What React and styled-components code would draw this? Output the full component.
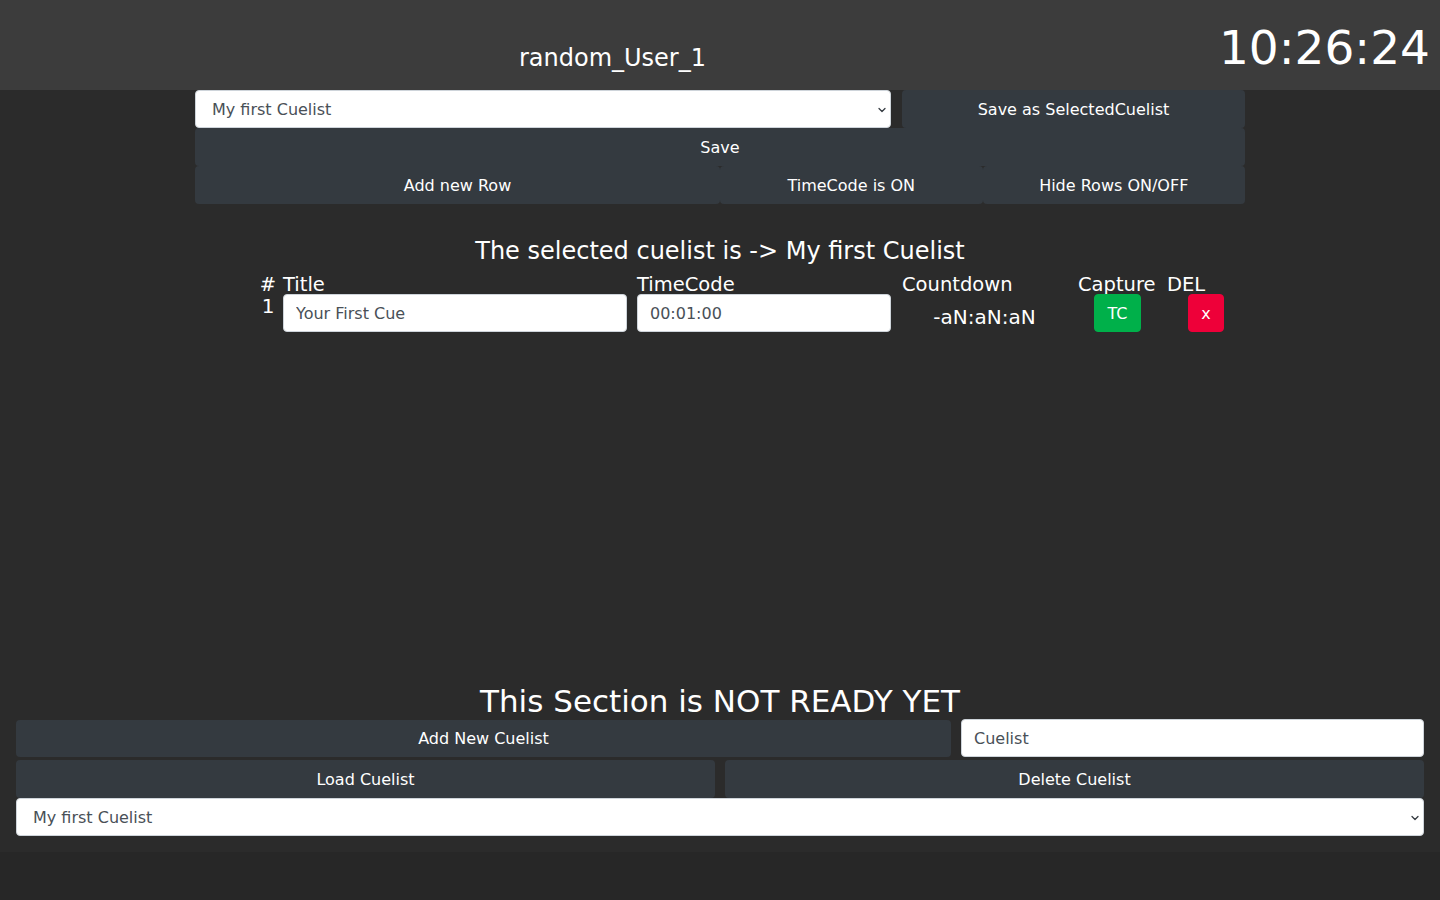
import React from 'react';
import styled, { createGlobalStyle } from 'styled-components';
import { ChevronDown } from 'lucide-react';

const GlobalStyle = createGlobalStyle`
  html, body {
    margin: 0;
    padding: 0;
    background: #272727;
    font-family: "DejaVu Sans", Verdana, sans-serif;
    color: #ffffff;
  }
  * {
    box-sizing: border-box;
  }
`;

const Page = styled.div`
  min-height: 852px;
  display: flex;
  flex-direction: column;
  background: #2b2b2b;
`;

const Header = styled.header`
  height: 90px;
  background: #3c3c3c;
  display: grid;
  grid-template-columns: 1fr auto;
  align-items: start;
  padding: 20px 10px 0 0;
`;

const UserName = styled.div`
  text-align: center;
  font-size: 24px;
  padding: 24px 0 0 6px;
`;

const Clock = styled.div`
  font-size: 47px;
  line-height: normal;
`;

const Main = styled.main`
  flex: 1;
  width: 1050px;
  margin: 0 auto;
`;

const ControlRow = styled.div`
  display: grid;
  grid-template-columns: ${(p) => p.$cols};
  column-gap: ${(p) => p.$colGap || 0}px;
  align-items: end;
  margin-top: ${(p) => p.$gap || 0}px;
`;

const Button = styled.button`
  height: ${(p) => p.$h || 38}px;
  margin-left: ${(p) => p.$ml || 0}px;
  grid-column: ${(p) => p.$span || 'auto'};
  background: #343a40;
  color: #ffffff;
  border: none;
  border-radius: 4px;
  font-family: inherit;
  font-size: 16px;
  padding: 0 12px;
  cursor: pointer;
`;

const SelectWrap = styled.div`
  position: relative;
  width: ${(p) => p.$w || '100%'};
`;

const Select = styled.select`
  appearance: none;
  width: 100%;
  height: 38px;
  background: #ffffff;
  border: 1px solid #ced4da;
  border-radius: 4px;
  padding: 0 28px 0 16px;
  font-family: inherit;
  font-size: 16px;
  color: #495057;
`;

const Chevron = styled(ChevronDown)`
  position: absolute;
  right: 3px;
  top: 14px;
  pointer-events: none;
  color: #343a40;
`;

const TextInput = styled.input`
  width: ${(p) => p.$w || '100%'};
  height: 38px;
  background: #ffffff;
  border: 1px solid #ced4da;
  border-radius: 4px;
  padding: 0 12px;
  font-family: inherit;
  font-size: 16px;
  color: #495057;
`;

const Heading = styled.h3`
  margin: 32px 0 0;
  font-size: 24px;
  line-height: 30px;
  font-weight: normal;
  text-align: center;
`;

const CueTable = styled.div`
  display: grid;
  grid-template-columns: 30px 354px 265px 176px 89px 78px;
  padding-left: 58px;
  margin-top: 9px;
`;

const HeadCell = styled.div`
  font-size: 19.5px;
  line-height: 19px;
  height: 19px;
  text-align: ${(p) => (p.$center ? 'center' : 'left')};
`;

const Cell = styled.div`
  font-size: 20px;
  text-align: ${(p) => (p.$center ? 'center' : 'left')};
  padding-right: ${(p) => p.$pr || 0}px;
  padding-top: ${(p) => p.$pt || 0}px;
`;

const SmallButton = styled.button`
  height: 38px;
  padding: 0 12px;
  border: 1px solid ${(p) => p.$color};
  border-radius: 4px;
  background: ${(p) => p.$color};
  color: #ffffff;
  font-family: inherit;
  font-size: 16px;
  cursor: pointer;
`;

const Bottom = styled.section`
  padding: 0 16px 16px;
`;

const BottomTitle = styled.h2`
  margin: 0;
  font-size: 31px;
  line-height: 35px;
  font-weight: normal;
  text-align: center;
`;

const cues = [{ id: 1, title: 'Your First Cue', tc: '00:01:00', countdown: '-aN:aN:aN' }];

export default function App() {
  return (
    <>
      <GlobalStyle />
      <Page>
        <Header>
          <UserName>random_User_1</UserName>
          <Clock>10:26:24</Clock>
        </Header>

        <Main>
          <ControlRow $cols="700px 350px">
            <SelectWrap $w="696px">
              <Select defaultValue="first">
                <option value="first">My first Cuelist</option>
              </Select>
              <Chevron size={12} strokeWidth={2.5} />
            </SelectWrap>
            <Button $ml={7}>Save as SelectedCuelist</Button>
          </ControlRow>
          <ControlRow $cols="1fr">
            <Button>Save</Button>
          </ControlRow>
          <ControlRow $cols="repeat(4, 1fr)">
            <Button $span="span 2">Add new Row</Button>
            <Button>TimeCode is ON</Button>
            <Button>Hide Rows ON/OFF</Button>
          </ControlRow>

          <Heading>The selected cuelist is -&gt; My first Cuelist</Heading>

          <CueTable>
            <HeadCell $center>#</HeadCell>
            <HeadCell>Title</HeadCell>
            <HeadCell>TimeCode</HeadCell>
            <HeadCell>Countdown</HeadCell>
            <HeadCell>Capture</HeadCell>
            <HeadCell>DEL</HeadCell>
            {cues.map((cue) => (
              <React.Fragment key={cue.id}>
                <Cell $center>{cue.id}</Cell>
                <Cell>
                  <TextInput $w="344px" defaultValue={cue.title} />
                </Cell>
                <Cell>
                  <TextInput $w="254px" defaultValue={cue.tc} />
                </Cell>
                <Cell $center $pr={11} $pt={11}>
                  {cue.countdown}
                </Cell>
                <Cell $center $pr={10}>
                  <SmallButton $color="#00b04a">TC</SmallButton>
                </Cell>
                <Cell $center>
                  <SmallButton $color="#ee0039">x</SmallButton>
                </Cell>
              </React.Fragment>
            ))}
          </CueTable>
        </Main>

        <Bottom>
          <BottomTitle>This Section is NOT READY YET</BottomTitle>
          <ControlRow $cols="935px 1fr" $colGap={10}>
            <Button $h={37}>Add New Cuelist</Button>
            <TextInput defaultValue="Cuelist" />
          </ControlRow>
          <ControlRow $cols="1fr 1fr" $colGap={10} $gap={3}>
            <Button>Load Cuelist</Button>
            <Button>Delete Cuelist</Button>
          </ControlRow>
          <ControlRow $cols="1fr">
            <SelectWrap>
              <Select defaultValue="first">
                <option value="first">My first Cuelist</option>
              </Select>
              <Chevron size={12} strokeWidth={2.5} />
            </SelectWrap>
          </ControlRow>
        </Bottom>
      </Page>
    </>
  );
}
